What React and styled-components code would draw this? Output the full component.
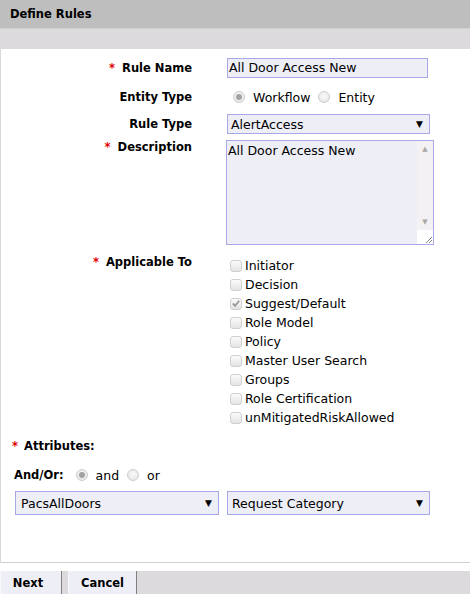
import React from "react";
import styled, { createGlobalStyle } from "styled-components";

const GlobalStyle = createGlobalStyle`
  body {
    margin: 0;
    background: #fff;
    font-family: "DejaVu Sans", Verdana, sans-serif;
    font-size: 12px;
    color: #000;
  }
`;

const applicableList = [
  { label: "Initiator" },
  { label: "Decision" },
  { label: "Suggest/Default", checked: true },
  { label: "Role Model" },
  { label: "Policy" },
  { label: "Master User Search" },
  { label: "Groups" },
  { label: "Role Certification" },
  { label: "unMitigatedRiskAllowed" },
];

const App = () => {
  return (
    <Page>
      <GlobalStyle />
      <Header>Define Rules</Header>
      <SubBand />
      <Panel>
        <FormRow $top={9} $height={20}>
          <Label>
            <Required>*</Required>Rule Name
          </Label>
          <TextInput>All Door Access New</TextInput>
        </FormRow>
        <FormRow $top={9} $height={20}>
          <Label>Entity Type</Label>
          <RadioGroup $offset={6}>
            <Radio $checked />
            <RadioText>Workflow</RadioText>
            <Radio />
            <RadioText>Entity</RadioText>
          </RadioGroup>
        </FormRow>
        <FormRow $top={7} $height={20}>
          <Label>Rule Type</Label>
          <Select $width={203} $pad={3}>
            <span>AlertAccess</span>
            <Arrow>▼</Arrow>
          </Select>
        </FormRow>
        <FormRow $top={6} $align="flex-start">
          <Label $lh={15}>
            <Required>*</Required>Description
          </Label>
          <TextArea>
            <TextAreaBody>All Door Access New</TextAreaBody>
            <ScrollBar>
              <ScrollArrow>▲</ScrollArrow>
              <ScrollTrack />
              <ScrollArrow>▼</ScrollArrow>
              <Grip>
                <svg width="10" height="10" viewBox="0 0 10 10">
                  <path d="M9 3 L3 9 M9 6 L6 9" stroke="#888" strokeWidth="1" />
                </svg>
              </Grip>
            </ScrollBar>
          </TextArea>
        </FormRow>
        <FormRow $top={11} $align="flex-start">
          <Label $lh={13}>
            <Required>*</Required>Applicable To
          </Label>
          <CheckList>
            {applicableList.map((item) => (
              <CheckRow key={item.label}>
                <CheckBox $checked={item.checked}>
                  {item.checked && (
                    <svg width="11" height="11" viewBox="0 0 11 11">
                      <path
                        d="M2 5.5 L4.5 8 L9 2.5"
                        fill="none"
                        stroke="#9a9a9a"
                        strokeWidth="2"
                      />
                    </svg>
                  )}
                </CheckBox>
                <span>{item.label}</span>
              </CheckRow>
            ))}
          </CheckList>
        </FormRow>
        <SectionTitle>
          <Required>*</Required>Attributes:
        </SectionTitle>
        <AndOrRow>
          <strong>And/Or:</strong>
          <RadioGroup $offset={12}>
            <Radio $checked />
            <RadioText>and</RadioText>
            <Radio />
            <RadioText>or</RadioText>
          </RadioGroup>
        </AndOrRow>
        <SelectRow>
          <Select $width={204} $height={24} $pad={5}>
            <span>PacsAllDoors</span>
            <Arrow>▼</Arrow>
          </Select>
          <Select $width={203} $height={24} $pad={4}>
            <span>Request Category</span>
            <Arrow>▼</Arrow>
          </Select>
        </SelectRow>
      </Panel>
      <Gap />
      <Footer>
        <FooterButton $width={62} $padRight={6}>
          Next
        </FooterButton>
        <FooterButton $width={69}>Cancel</FooterButton>
      </Footer>
    </Page>
  );
};

export default App;

const Page = styled.div`
  width: 470px;
  height: 594px;
  display: flex;
  flex-direction: column;
  overflow: hidden;
`;

const Header = styled.div`
  height: 28px;
  background: #bebebe;
  display: flex;
  align-items: center;
  padding-left: 10px;
  font-weight: bold;
  font-size: 11.5px;
`;

const SubBand = styled.div`
  height: 20px;
  background: #dcdadd;
  border-top: 1px solid #d0ced1;
`;

const Panel = styled.div`
  height: 514px;
  box-sizing: border-box;
  border-left: 1px solid #d8d8d8;
  border-bottom: 1px solid #cfcfcf;
  display: flex;
  flex-direction: column;
`;

const FormRow = styled.div`
  display: flex;
  align-items: ${(p) => p.$align || "center"};
  margin-top: ${(p) => p.$top}px;
  height: ${(p) => (p.$height ? `${p.$height}px` : "auto")};
`;

const Label = styled.div`
  width: 191px;
  flex: none;
  text-align: right;
  font-weight: bold;
  font-size: 11.5px;
  line-height: ${(p) => (p.$lh ? `${p.$lh}px` : "normal")};
  margin-right: 35px;
`;

const Required = styled.span`
  color: #e00000;
  font-weight: bold;
  margin-right: 7px;
`;

const TextInput = styled.div`
  width: 201px;
  height: 20px;
  box-sizing: border-box;
  background: #eeeef6;
  border: 1px solid #a8a8e8;
  padding-left: 1px;
  line-height: 18px;
  white-space: nowrap;
  font-size: 12.5px;
`;

const RadioGroup = styled.div`
  display: flex;
  align-items: center;
  margin-left: ${(p) => p.$offset}px;
  font-size: 12.5px;
`;

const Radio = styled.span`
  width: 12px;
  height: 12px;
  box-sizing: border-box;
  border-radius: 50%;
  border: 1px solid #cdcdcd;
  background: radial-gradient(circle at 50% 40%, #fafafa, #e2e2e2);
  display: flex;
  align-items: center;
  justify-content: center;
  &::after {
    content: "";
    display: ${(p) => (p.$checked ? "block" : "none")};
    width: 6px;
    height: 6px;
    border-radius: 50%;
    background: #a2a2a2;
  }
`;

const RadioText = styled.span`
  margin: 0 8px 0 8px;
`;

const Select = styled.div`
  width: ${(p) => p.$width}px;
  height: ${(p) => p.$height || 20}px;
  box-sizing: border-box;
  background: #eeeef6;
  border: 1px solid #a8a8e8;
  display: flex;
  align-items: center;
  justify-content: space-between;
  padding: 0 6px 0 ${(p) => p.$pad}px;
  white-space: nowrap;
  font-size: 12.5px;
`;

const Arrow = styled.span`
  font-size: 9px;
  color: #000;
`;

const TextArea = styled.div`
  width: 208px;
  height: 105px;
  margin-left: -1px;
  box-sizing: border-box;
  background: #eeeef6;
  border: 1px solid #a8a8e8;
  display: flex;
  font-size: 12.5px;
`;

const TextAreaBody = styled.div`
  flex: 1;
  padding: 2px 1px;
  line-height: 16px;
`;

const ScrollBar = styled.div`
  width: 16px;
  display: flex;
  flex-direction: column;
  align-items: center;
  background: #f4f1f5;
`;

const ScrollArrow = styled.span`
  font-size: 7px;
  color: #a8a8a8;
  height: 16px;
  line-height: 16px;
`;

const ScrollTrack = styled.div`
  flex: 1;
`;

const Grip = styled.div`
  width: 16px;
  height: 14px;
  background: #fff;
  display: flex;
  align-items: flex-end;
  justify-content: flex-end;
`;

const CheckList = styled.div`
  display: flex;
  flex-direction: column;
  margin-left: 3px;
  font-size: 12.5px;
`;

const CheckRow = styled.div`
  height: 19px;
  display: flex;
  align-items: center;
  gap: 3px;
`;

const CheckBox = styled.span`
  width: 12px;
  height: 12px;
  box-sizing: border-box;
  border: 1px solid #d0d0d0;
  border-radius: 3px;
  background: linear-gradient(#fbfbfb, #e4e4e4);
  display: flex;
  align-items: center;
  justify-content: center;
`;

const SectionTitle = styled.div`
  margin-top: 10px;
  padding-left: 11px;
  height: 18px;
  display: flex;
  align-items: center;
  font-weight: bold;
  font-size: 11.5px;
  ${Required} {
    margin-right: 6px;
  }
`;

const AndOrRow = styled.div`
  margin-top: 10px;
  padding-left: 13px;
  height: 20px;
  display: flex;
  align-items: center;
  strong {
    font-size: 11.5px;
  }
`;

const SelectRow = styled.div`
  margin-top: 6px;
  padding-left: 14px;
  display: flex;
  gap: 8px;
`;

const Gap = styled.div`
  height: 8px;
`;

const Footer = styled.div`
  flex: 1;
  background: #dcdadd;
  display: flex;
  gap: 6px;
`;

const FooterButton = styled.div`
  width: ${(p) => p.$width}px;
  box-sizing: border-box;
  padding-right: ${(p) => p.$padRight || 0}px;
  background: #eeeef6;
  border-right: 1px solid #808080;
  border-left: 1px solid #f8f8f8;
  font-weight: bold;
  font-size: 11.5px;
  display: flex;
  align-items: center;
  justify-content: center;
`;
